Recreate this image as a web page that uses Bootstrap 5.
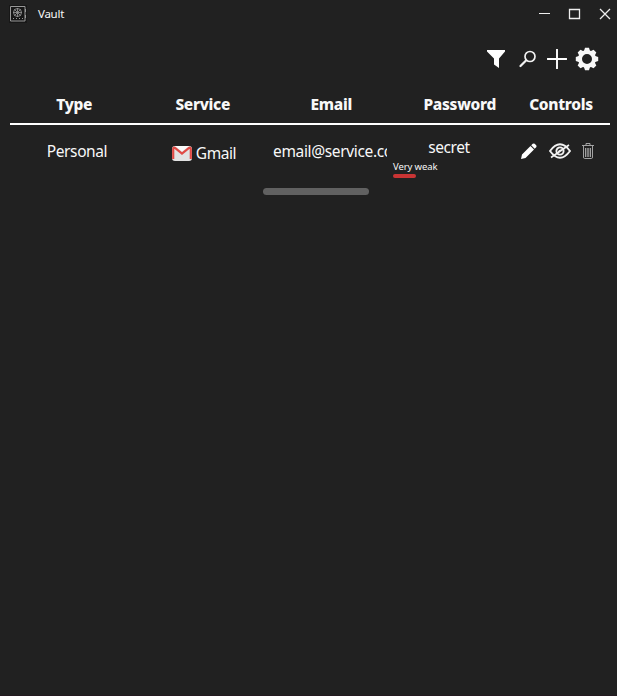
<!DOCTYPE html>
<html lang="en">
<head>
<meta charset="utf-8">
<title>Vault</title>
<link href="https://cdn.jsdelivr.net/npm/bootstrap@5.3.0/dist/css/bootstrap.min.css" rel="stylesheet">
<style>
body{background:#212121;color:#f8f8f8;font-family:"Noto Sans","Open Sans",sans-serif;height:696px;overflow:hidden;border-bottom:1px solid #241a20}
svg{display:block;flex:none}
.titlebar{height:27px;padding-left:9px;padding-right:6px}
.app-name{font-size:11.5px;letter-spacing:-.25px;line-height:16px;margin-left:11px;margin-top:1px}
.win{gap:17px}
.tools{height:64px;padding-right:18px}
.filter{margin-right:14px}
.plus{margin-left:10px}
.vault{margin:0 7px 0 10px}
.vhead{display:grid;grid-template-columns:repeat(4,128.5px) 74px;height:34px;border-bottom:2px solid #fff;font-size:15.5px;font-weight:800;line-height:27px;text-align:center;letter-spacing:-.3px}
.vrow{display:grid;grid-template-columns:127px 126px 120px 128px 76px;padding-left:10px;height:70px;font-size:15.5px;letter-spacing:-.4px;line-height:22px}
.vrow>.cell{width:114px}
.c-type{padding-top:15px}
.c-service{padding-top:17px;gap:4px}
.c-mail{padding-top:15px;white-space:nowrap}
.c-mail{letter-spacing:-.35px}
.c-pass{padding-top:11px}
.secret{width:112px}
.strength{font-size:9.5px;line-height:12px;letter-spacing:-.1px;margin-top:3px}
.meter{width:23px;height:4px;border-radius:2px;background:#c93434;margin-top:1px}
.c-ctl{padding-top:18px}
.eye{margin-left:12px}
.trash{margin-left:11px}
.thumb{width:106px;height:7px;border-radius:4px;background:#616161;margin-left:253px;margin-top:-7px}
</style>
</head>
<body>
<header class="titlebar d-flex align-items-center justify-content-between">
  <div class="d-flex align-items-center">
    <svg width="18" height="18" viewBox="-1 0 18 18" fill="none" stroke="#999"><path d="M-1 0h18v18H-1z" fill="#171717" stroke="none"/><path d="M.5 1.500h14.500v14.500H.5zM15.500 4v3M15.500 10v3"/><circle cx="7.500" cy="7.500" r="4" stroke="#888"/><path d="M7.500 3v9M3 7.500h9M4.500 4.500l6 6M10.500 4.500l-6 6" stroke-width=".8"/><path d="M3 13.500h1M6 13.500h1M9 13.500h1M12 13.500h1"/></svg>
    <span class="app-name">Vault</span>
  </div>
  <div class="win d-flex align-items-center">
    <svg width="13" height="12" viewBox="0 0 13 12"><path d="M1 5.500h11" stroke="#eee"/></svg>
    <svg width="13" height="12" viewBox="0 0 13 12"><path d="M1.500 1.500h10v9h-10z" fill="none" stroke="#eee" stroke-width="1.300"/></svg>
    <svg width="13" height="12" viewBox="0 0 13 12"><path d="M2 1l10 10M12 1L2 11" stroke="#eee" stroke-width="1.300"/></svg>
  </div>
</header>
<div class="tools d-flex align-items-center justify-content-end">
  <svg width="18" height="18" viewBox="0 0 18 18" class="filter"><path d="M0 0h18v1.500l-6 7V18L7 14.500v-6l-7-7z" fill="#fff"/></svg>
  <svg width="18" height="18" viewBox="0 0 18 18" fill="none" stroke="#f2f2f2" stroke-linecap="round"><circle cx="11" cy="6.500" r="5" stroke-width="1.700"/><path d="M7 10.500L1.500 16" stroke-width="2.200"/></svg>
  <svg width="20" height="20" viewBox="0 0 20 20" class="plus"><path d="M10 .5v19M.5 10h19" stroke="#fff" stroke-width="1.900" stroke-linecap="round"/></svg>
  <svg width="24" height="24" viewBox="-12 -12 24 24" class="ms-2"><circle r="7" fill="none" stroke="#f8f8f8" stroke-width="4"/><g fill="#f8f8f8"><path id="tooth" d="M-3.200-7.500L-2-11.200h4L3.200-7.500z"/><use href="#tooth" transform="rotate(45)"/><use href="#tooth" transform="rotate(90)"/><use href="#tooth" transform="rotate(135)"/><use href="#tooth" transform="rotate(180)"/><use href="#tooth" transform="rotate(225)"/><use href="#tooth" transform="rotate(270)"/><use href="#tooth" transform="rotate(315)"/></g></svg>
</div>
<main class="vault">
  <div class="vhead"><span>Type</span><span>Service</span><span>Email</span><span>Password</span><span>Controls</span></div>
  <div class="vrow">
    <div class="cell c-type text-center">Personal</div>
    <div class="cell c-service d-flex justify-content-center align-items-start">
      <svg width="20" height="15" viewBox="0 0 20 15" class="mt-1"><rect y="0" width="20" height="15" rx="3" fill="#e2e2e2"/><path d="M3 0h14l-7 5.500z" fill="#fafafa"/><path d="M1.200 13V3Q1.500 1 3 2l7 5.500L17 2q1.500-1 1.800 1v10" fill="none" stroke="#e04a45" stroke-width="2.200"/></svg>
      <span>Gmail</span>
    </div>
    <div class="cell c-mail overflow-hidden">email@service.com</div>
    <div class="cell c-pass">
      <div class="secret text-center">secret</div>
      <div class="strength">Very weak</div>
      <div class="meter"></div>
    </div>
    <div class="c-ctl d-flex align-items-start">
      <svg width="16" height="16" viewBox="0 0 16 16" fill="#fff"><path d="M0 16l1-4.500L9.500 3l3.500 3.500L4.500 15zM10.200 2.300l1.500-1.500q1-.8 2 0l1.500 1.500q.8 1 0 2L13.700 5.800z"/></svg>
      <svg width="22" height="16" viewBox="0 0 22 16" class="eye" fill="none" stroke="#f2f2f2"><path d="M1 8Q11-5.500 21 8Q11 21.500 1 8z" stroke-width="1.900"/><circle cx="11" cy="8" r="3.600" stroke-width="1.900"/><path d="M9.500 9.500q0-2.500 3-2.500" stroke-width="1.200"/><path d="M2 14.500L20 2" stroke-width="1.600"/></svg>
      <svg width="12" height="16" viewBox="0 0 12 16" class="trash" fill="none" stroke="#aaa"><path d="M0 2.500h12M4 2V.5h4V2M1.500 3v11q0 1.500 1 1.500h7q1 0 1-1.500V3M3.500 5v9M5.200 5v9M6.800 5v9M8.500 5v9" stroke-width=".95"/></svg>
    </div>
  </div>
  <div class="thumb"></div>
</main>
<script src="https://cdn.jsdelivr.net/npm/bootstrap@5.3.0/dist/js/bootstrap.bundle.min.js"></script>
</body>
</html>
